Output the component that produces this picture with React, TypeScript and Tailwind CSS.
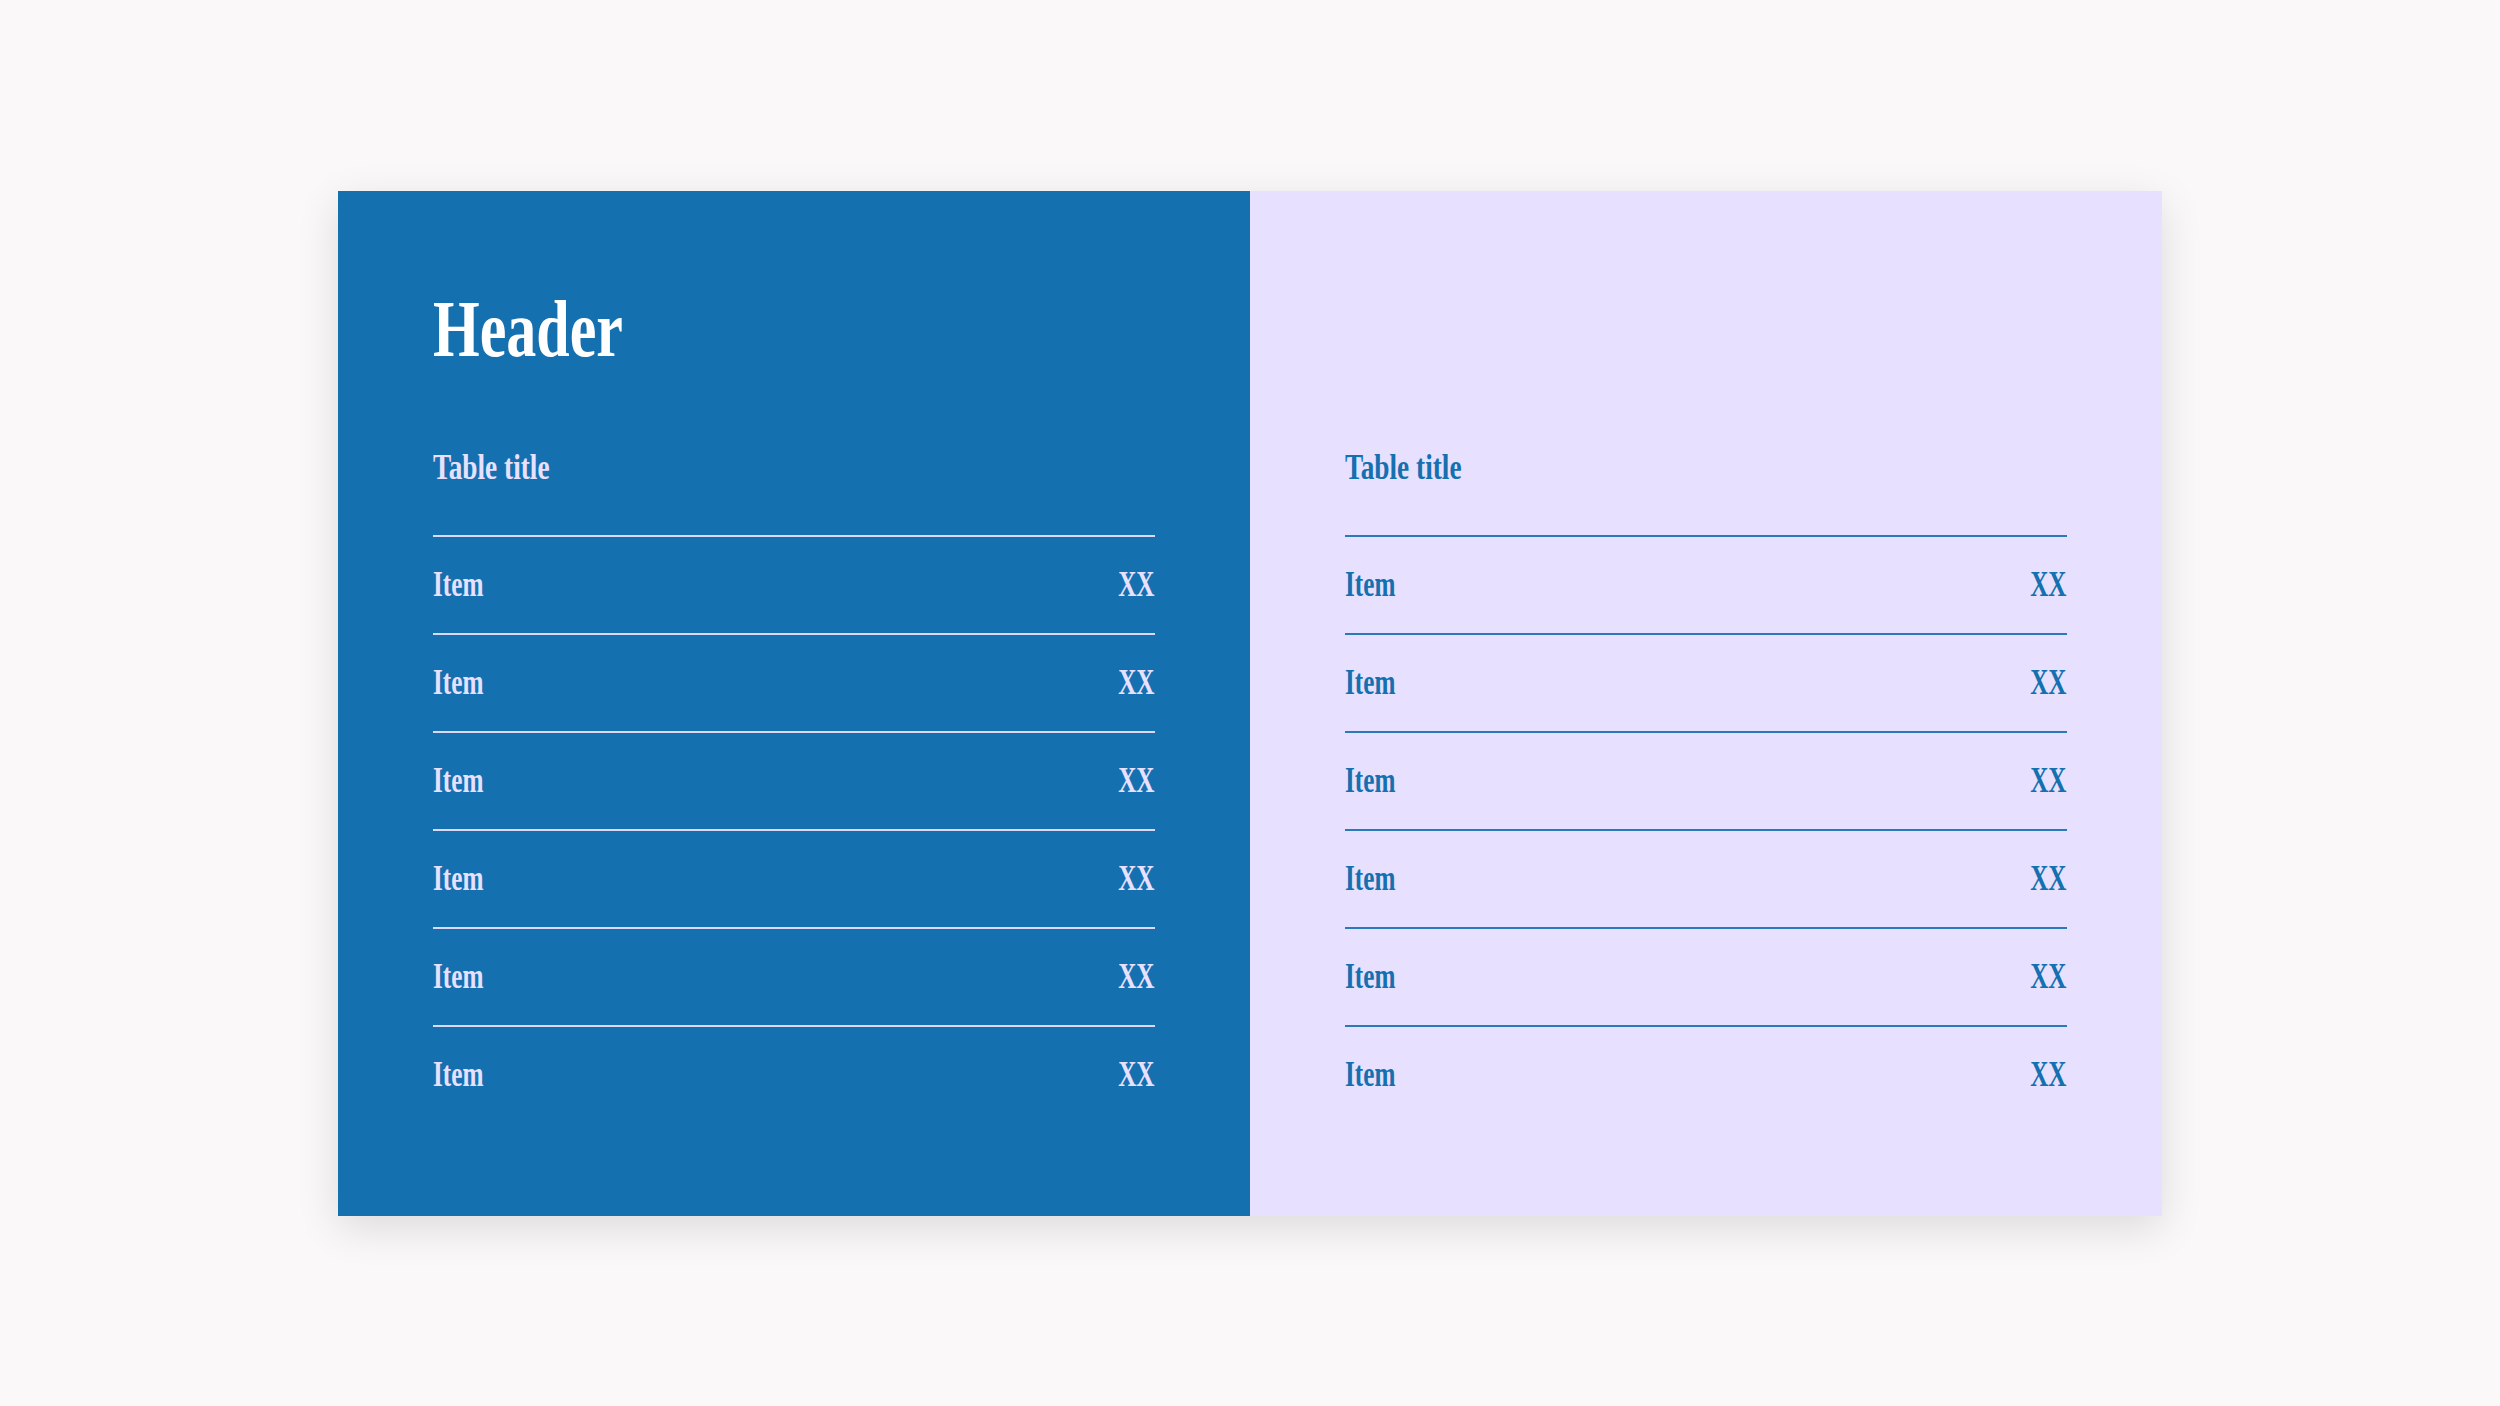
import React from 'react';

const rows = ['Item', 'Item', 'Item', 'Item', 'Item', 'Item'];

// narrow display serif: Liberation Serif squeezed to the reference widths
const serif = "font-['Liberation_Serif','Times_New_Roman',serif] font-bold";

interface TableProps {
  tone: 'dark' | 'light';
}

const PriceTable: React.FC<TableProps> = ({ tone }) => {
  const text = tone === 'dark' ? 'text-[#e8e0ff]' : 'text-[#1570af]';
  const line = tone === 'dark' ? 'border-[#dcd8f6]' : 'border-[#2a79b8]';
  return (
    <div>
      <h3 className={`${serif} ${text} text-[35px] leading-none h-[35px]`}>
        <span className="inline-block origin-left scale-x-[0.78]">Table title</span>
      </h3>
      <div className="mt-[50px]">
        {rows.map((item, i) => (
          <div key={i} className={`flex h-[98px] items-center justify-between border-t-2 ${line}`}>
            <span className={`${serif} ${text} text-[35px] leading-none inline-block origin-left scale-x-[0.72]`}>
              {item}
            </span>
            <span className={`${serif} ${text} text-[35px] leading-none inline-block origin-right scale-x-[0.72]`}>
              XX
            </span>
          </div>
        ))}
      </div>
    </div>
  );
};

const App: React.FC = () => {
  return (
    <div className="min-h-screen w-full bg-[#faf8f9] flex items-center justify-center">
      <div className="flex w-[1824px] h-[1025px] shadow-[0_12px_40px_rgba(0,0,0,0.12)]">
        <div className="w-1/2 bg-[#1570af] px-[95px] pt-[98px]">
          <h1 className={`${serif} text-white text-[80px] leading-none h-[80px] mb-[81px]`}>
            <span className="inline-block origin-left scale-x-[0.75]">Header</span>
          </h1>
          <PriceTable tone="dark" />
        </div>
        <div className="w-1/2 bg-[#e8e0ff] px-[95px] pt-[98px]">
          <div className="h-[80px] mb-[81px]" />
          <PriceTable tone="light" />
        </div>
      </div>
    </div>
  );
};

export default App;
